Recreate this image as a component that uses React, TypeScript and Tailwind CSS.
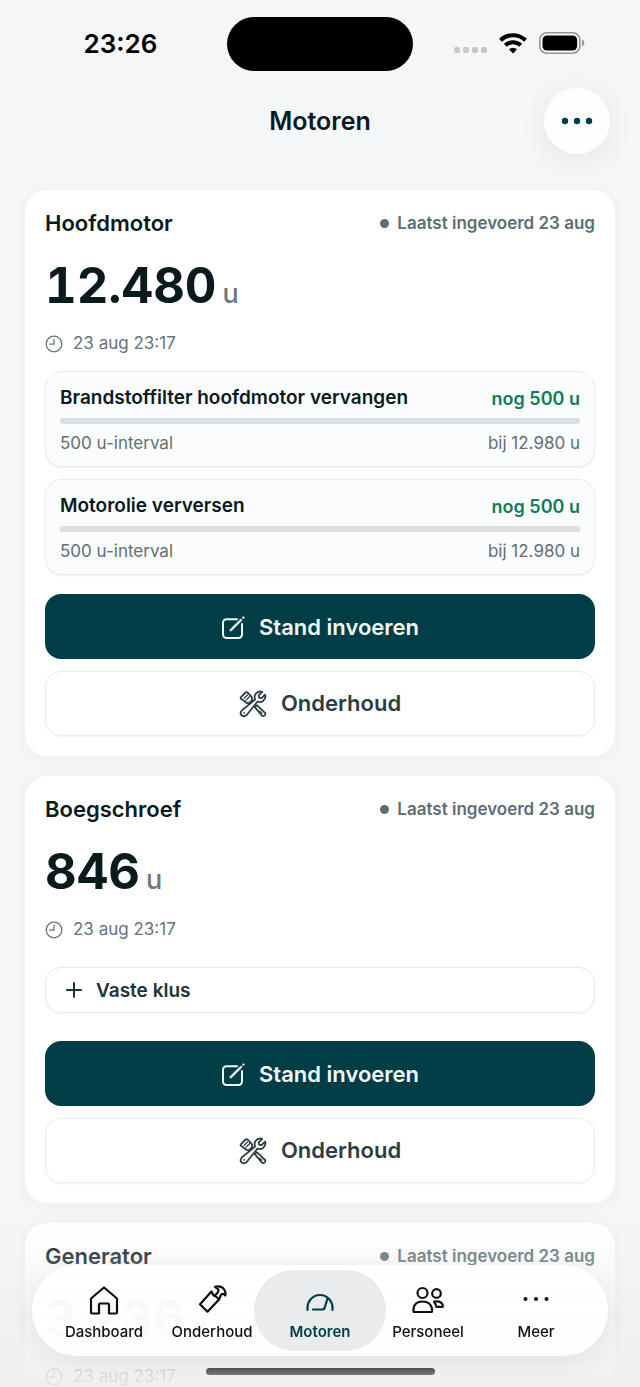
import type { ReactNode } from "react";

type Task = { name: string; remaining: string; interval: string; due: string };
type Engine = { name: string; hours: string; tasks: Task[]; addTask?: boolean };

const engines: Engine[] = [
	{
		name: "Hoofdmotor",
		hours: "12.480",
		tasks: [
			{ name: "Brandstoffilter hoofdmotor vervangen", remaining: "nog 500 u", interval: "500 u-interval", due: "bij 12.980 u" },
			{ name: "Motorolie verversen", remaining: "nog 500 u", interval: "500 u-interval", due: "bij 12.980 u" },
		],
	},
	{ name: "Boegschroef", hours: "846", tasks: [], addTask: true },
	{ name: "Generator", hours: "3.236", tasks: [], addTask: true },
];

function ClockIcon() {
	return (
		<svg width="18" height="18" viewBox="0 0 18 18" fill="none" stroke="currentColor" strokeWidth="1.3" strokeLinecap="round" strokeLinejoin="round" aria-hidden="true">
			<circle cx="9" cy="9" r="7.8" />
			<path d="M9 4.4V9.2H4.8" />
		</svg>
	);
}

function EditIcon() {
	return (
		<svg width="24" height="24" viewBox="0 0 24 24" fill="none" stroke="currentColor" strokeWidth="2" strokeLinecap="round" strokeLinejoin="round" aria-hidden="true">
			<path d="M16 3.200H5.500A3.500 3.500 0 0 0 2 6.700V18.500a3.500 3.500 0 0 0 3.500 3.500h12a3.500 3.500 0 0 0 3.500-3.500V8" />
			<path d="M9.800 14.200 20 4" strokeWidth="2.400" />
			<path d="M22.400 1.600h.01" strokeWidth="2.400" />
		</svg>
	);
}

function ToolsIcon() {
	return (
		<svg width="28" height="28" viewBox="0 0 28 28" fill="none" stroke="currentColor" strokeWidth="1.8" strokeLinecap="round" strokeLinejoin="round" aria-hidden="true">
			<path d="M2 7.200 6.600 2.500Q7.600 1.600 8.600 2.600L12.200 6.400Q13.600 8 13 10.400L10.400 13Q8 13.500 6.400 12L2 8.800Q1.200 8 2 7.200Z" />
			<path d="M5.200 8.200 8.500 5M7 10.100 10.400 6.700" strokeWidth="1.300" />
			<path d="M15.800 17.200 17.800 15.200 26 22.800Q26.900 24 25.700 25.300 24.300 26.700 23 25.600Z" />
			<path d="M20.800 21.100 23 23.200" strokeWidth="1.200" />
			<path d="M23.300 1.800Q19 .6 16.500 4 14.900 6.600 16.100 9.500L3.200 20.100Q.3 23 2.600 25.400 5.200 27.600 7.900 24.700L18.300 11.700Q21.600 12.800 24.300 10.700 27.300 8 26.100 4.700L22.500 8.100 20 7.700 19.700 5.300Z" fill="#fff" />
			<circle cx="5.200" cy="22.800" r=".9" fill="currentColor" stroke="none" />
		</svg>
	);
}

function StatusBar() {
	return (
		<div className="grid h-22 grid-cols-[1fr_186px_1fr] items-start pt-4">
			<div className="flex h-[54px] items-center justify-center pl-3.5 text-[26px] font-semibold text-black">23:26</div>
			<div className="mt-px h-[54px] rounded-full bg-black" />
			<div className="flex h-[54px] items-center justify-center gap-3 pr-3.5">
				<svg width="33" height="28" viewBox="0 0 33 28" fill="#c6c8ca" aria-hidden="true">
					<rect x="0" y="18" width="6" height="6" rx="2" />
					<rect x="9" y="18" width="6" height="6" rx="2" />
					<rect x="18" y="18" width="6" height="6" rx="2" />
					<rect x="27" y="18" width="6" height="6" rx="2" />
				</svg>
				<svg width="28" height="21" viewBox="0 0 28 21" fill="none" stroke="#000" strokeWidth="4" aria-hidden="true">
					<path d="M1.500 7.200a18 18 0 0 1 25 0" />
					<path d="M6.300 12.300a11 11 0 0 1 15.400 0" />
					<path d="M14 20.500l-4-4.200a5.800 5.800 0 0 1 8 0z" fill="#000" stroke="none" />
				</svg>
				<svg width="46" height="22" viewBox="0 0 46 22" aria-hidden="true">
					<rect x=".8" y=".8" width="40" height="20.400" rx="7" fill="none" stroke="#939597" strokeWidth="1.600" />
					<rect x="3.500" y="3.500" width="34.600" height="15" rx="4.500" fill="#000" />
					<path d="M43 7.500q2.500 1 2.500 3.500T43 14.500z" fill="#939597" />
				</svg>
			</div>
		</div>
	);
}

function TaskCard({ task }: { task: Task }) {
	return (
		<li className="rounded-2xl border border-[#e9ecee] bg-[#fafcfd] px-3.5 pt-3 pb-2.5 shadow-xs">
			<div className="flex h-7 items-center justify-between">
				<h3 className="text-[19px] font-semibold text-[#0b1a1d]">{task.name}</h3>
				<span className="text-[18px] font-semibold text-[#0b7d57]">{task.remaining}</span>
			</div>
			<div className="mt-1.5 h-1.5 rounded-full bg-[#dcdfe1]" />
			<div className="mt-2 flex h-6 items-center justify-between text-[17px] text-[#626f73]">
				<span>{task.interval}</span>
				<span>{task.due}</span>
			</div>
		</li>
	);
}

function EngineCard({ engine }: { engine: Engine }) {
	return (
		<article className="rounded-[22px] bg-white p-5 shadow-[0_2px_14px_rgba(20,40,45,0.04)]">
			<div className="flex h-[26px] items-center justify-between">
				<h2 className="text-[22px] font-semibold text-[#0b1a1d]">{engine.name}</h2>
				<p className="flex items-center gap-2 text-[17px] font-semibold text-[#5c6e73]">
					<span className="size-[9px] rounded-full bg-[#5c6e73]" />
					<span className="pt-0.5">Laatst ingevoerd 23 aug</span>
				</p>
			</div>
			<p className="mt-5 flex h-[60px] items-baseline gap-1.5 text-[49px] leading-[60px] font-bold text-[#0b1a1d] tabular-nums">
				{engine.hours}
				<span className="text-[27px] font-medium text-[#6a7a7f]">u</span>
			</p>
			<p className="mt-4 flex h-6 items-center gap-2.5 text-[17px] text-[#66757a]">
				<ClockIcon />
				23 aug 23:17
			</p>
			{engine.tasks.length > 0 && (
				<ul className="mt-[15px] flex flex-col gap-3">
					{engine.tasks.map((task) => (
						<TaskCard key={task.name} task={task} />
					))}
				</ul>
			)}
			{engine.addTask && (
				<button type="button" className="mt-[25px] mb-7 flex h-[46px] w-full items-center gap-3.5 rounded-2xl border border-[#e6eaec] px-5 text-[19px] font-semibold text-[#1f3438] shadow-xs">
					<svg width="16" height="16" viewBox="0 0 16 16" stroke="currentColor" strokeWidth="2" strokeLinecap="round" aria-hidden="true">
						<path d="M8 1v14M1 8h14" />
					</svg>
					<span className="pt-0.5">Vaste klus</span>
				</button>
			)}
			<div className="mt-[19px] flex flex-col gap-3">
				<button type="button" className="flex h-[65px] items-center justify-center gap-3.5 rounded-2xl bg-[#003e47] pt-0.5 text-[22px] font-semibold text-[#f2f8f8]">
					<EditIcon />
					Stand invoeren
				</button>
				<button type="button" className="flex h-[65px] items-center justify-center gap-3.5 rounded-2xl border border-[#e9ecee] text-[22px] font-semibold text-[#2c3e42] shadow-xs">
					<ToolsIcon />
					Onderhoud
				</button>
			</div>
		</article>
	);
}

function TabIcon({ children }: { children: ReactNode }) {
	return (
		<svg width="32" height="32" viewBox="0 0 32 32" fill="none" stroke="currentColor" strokeWidth="2.200" strokeLinecap="round" strokeLinejoin="round" aria-hidden="true">
			{children}
		</svg>
	);
}

const tabs = [
	{
		label: "Dashboard",
		icon: <path d="M3 14.500 16 3.500 29 14.500V28.500Q29 29.500 28 29.500H21V20.500Q21 19.500 20 19.500H12Q11 19.500 11 20.500V29.500H4Q3 29.500 3 28.500Z" />,
	},
	{
		label: "Onderhoud",
		icon: (
			<>
				<path d="M11.500 27.700 4 20.200 15.500 7.500 17.500 11.500Q21 12.500 23 15.500Z" />
				<path d="M19 2.800Q25.500 1.200 28.500 6 30 9 29.300 11.500 27.500 9 25.200 10.500L23 15.500M19 2.800 22.500 5.500Q22.500 9 18.500 11.500" />
			</>
		),
	},
	{
		label: "Motoren",
		icon: (
			<>
				<path d="M3.500 26V23.500A12.500 12.500 0 0 1 28.500 23.500V26" />
				<path d="M9 25.500H18.500Q20 25.500 20.600 24L23.500 14.500" />
			</>
		),
	},
	{
		label: "Personeel",
		icon: (
			<>
				<circle cx="10.500" cy="9" r="5" />
				<circle cx="24.500" cy="9.500" r="4.300" />
				<path d="M1.500 27.500V24.500Q2.500 17.500 10.500 17.500T20 24.500V27.500Q20 28 19.500 28H2Q1.500 28 1.500 27.500Z" />
				<path d="M22 17.700Q29.500 16.500 30.800 21.500V22.800H24.500Q23.500 20 22 17.700Z" />
			</>
		),
	},
	{
		label: "Meer",
		icon: (
			<g fill="currentColor" stroke="none">
				<circle cx="5.500" cy="15" r="2" />
				<circle cx="16" cy="15" r="2" />
				<circle cx="26.500" cy="15" r="2" />
			</g>
		),
	},
];

function TabBar() {
	return (
		<div className="fixed inset-x-0 bottom-0 flex h-41 flex-col justify-end bg-linear-to-b from-[#edeeef]/0 via-[#edeeef]/50 via-45% to-[#edeeef]/90 px-8 pb-3">
			<nav className="grid h-[91px] grid-cols-5 rounded-full bg-white/95 px-4.5 py-[5px] shadow-[0_4px_24px_rgba(0,0,0,0.08)]">
				{tabs.map((tab) => {
					const active = tab.label === "Motoren";
					return (
						<a
							key={tab.label}
							href={`#${tab.label.toLowerCase()}`}
							aria-current={active ? "page" : undefined}
							className={
								active
									? "-mx-3 flex flex-col items-center gap-1.5 rounded-full bg-[#e9ebec] pt-3.5 text-[15px] leading-5 font-semibold text-[#003e47]"
									: "flex flex-col items-center gap-1.5 pt-3.5 text-[15px] leading-5 font-medium text-[#0d1011]"
							}
						>
							<TabIcon>{tab.icon}</TabIcon>
							{tab.label}
						</a>
					);
				})}
			</nav>
			<div className="mx-auto mt-3 h-[7px] w-[229px] rounded-full bg-linear-to-b from-[#4c4e4f] to-[#77797a]" />
		</div>
	);
}

export default function App() {
	return (
		<div className="h-screen overflow-hidden bg-[#f5f6f8] font-['Inter',sans-serif]">
			<StatusBar />
			<header className="grid h-[66px] grid-cols-[66px_1fr_66px] items-center px-7.5">
				<h1 className="col-start-2 pt-0.5 text-center text-[25px] font-semibold text-[#0b1a1d]">Motoren</h1>
				<button type="button" aria-label="Meer opties" className="flex size-[66px] items-center justify-center rounded-full bg-[#fdfeff] text-[#003e47] shadow-[0_6px_28px_rgba(0,0,0,0.07)]">
					<svg width="32" height="8" viewBox="0 0 32 8" fill="currentColor" aria-hidden="true">
						<circle cx="4" cy="4" r="3.200" />
						<circle cx="16" cy="4" r="3.200" />
						<circle cx="28" cy="4" r="3.200" />
					</svg>
				</button>
			</header>
			<main className="flex flex-col gap-5 px-[25px] pt-9">
				{engines.map((engine) => (
					<EngineCard key={engine.name} engine={engine} />
				))}
			</main>
			<TabBar />
		</div>
	);
}
